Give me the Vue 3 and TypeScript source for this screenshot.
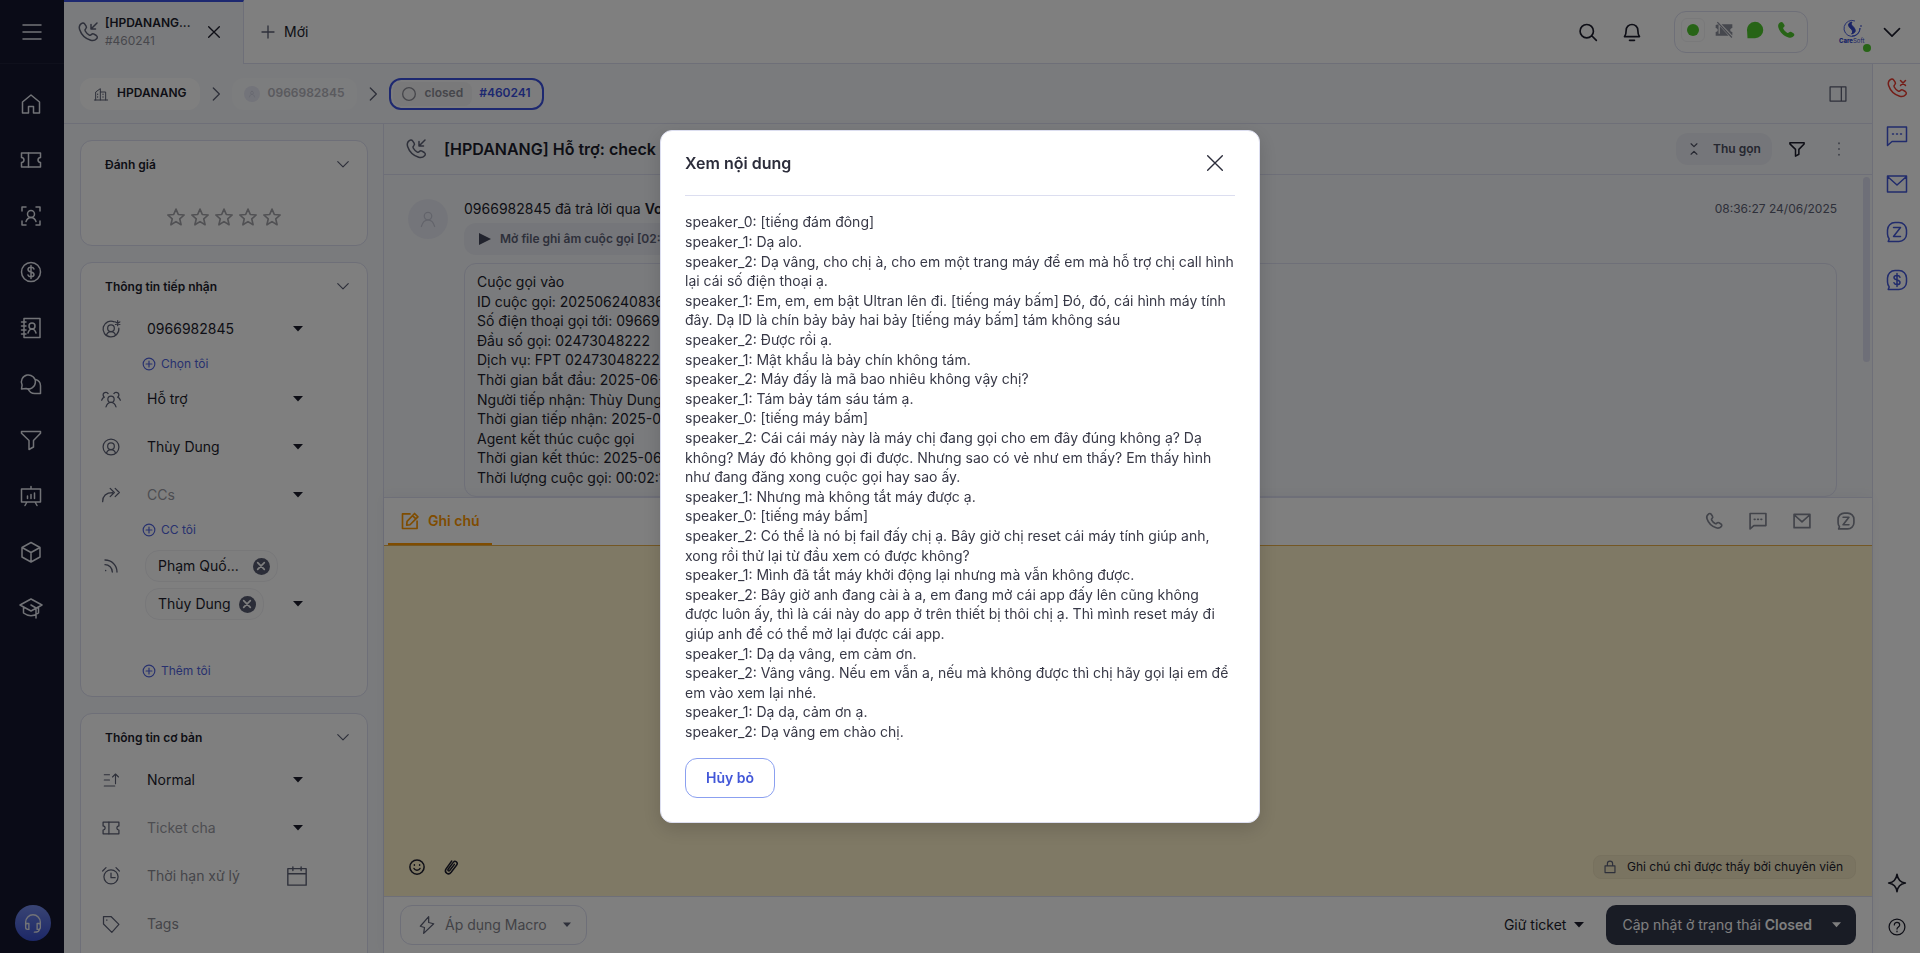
<script setup lang="ts">
import { h, ref } from 'vue'

const handset =
  'M5.300 3.700c1-1 2.500-.9 3.300.2l1.500 2.300c.6.9.4 1.900-.4 2.600-.9.7-1 1.300-.5 2.200 1 1.800 2.300 3.100 4.100 4.100.9.5 1.400.3 2.100-.5.700-.8 1.700-1 2.600-.5l2.300 1.400c1.200.8 1.300 2.300.3 3.300-1.600 1.700-3.500 2.200-5.900 1.400C9.300 18.500 5.300 14.500 3.600 9.400c-.8-2.400-.2-4.200 1.700-5.700z'
const ticket =
  'M2.500 5h19v4.500c-1.500.2-2.500 1.100-2.500 2.500s1 2.300 2.500 2.500V19h-19v-4.500c1.500-.2 2.500-1.100 2.500-2.500s-1-2.300-2.500-2.500V5z'
const balloon = 'M12 2.500h2a7.500 7.500 0 0 1 7.500 7.500v4a7.500 7.500 0 0 1-7.500 7.500H3.200l1-2.600A8 8 0 0 1 2.500 14v-4A7.500 7.500 0 0 1 10 2.500z'

const icons: Record<string, string[]> = {
  menu: ['M3 5h18M3 12h18M3 19h18'],
  home: ['M3.500 21V10L12 3l8.500 7v11h-6v-6.500h-5V21z'],
  ticket: [ticket, 'M9.500 5v14'],
  scan: ['M3 7V3h4M17 3h4v4M21 17v4h-4M7 21H3v-4', 'M12 6.500a3.500 3.500 0 1 1 0 7 3.500 3.500 0 0 1 0-7z', 'M7 17.500c1-2.600 2.600-4 5-4s4 1.400 5 4'],
  dollar: ['M12 2.500a9.500 9.500 0 1 1 0 19 9.500 9.500 0 0 1 0-19z', 'M15 9c-.4-1.200-1.500-1.700-3-1.700-1.700 0-3 .8-3 2.200 0 3.500 6 1.500 6 5 0 1.400-1.300 2.200-3 2.200-1.500 0-2.600-.6-3-1.800M12 5.500v13'],
  contacts: ['M5 2.500h16v19H5zM2.500 6H7M2.500 10H7M2.500 14H7M2.500 18H7', 'M13 7a3 3 0 1 1 0 6 3 3 0 0 1 0-6z', 'M9 17c.8-2.400 2-4 4-4s3.200 1.600 4 4'],
  chats: ['M2.500 17l.6-4A7 7 0 1 1 7 16.500z', 'M16.500 7.500c3 .8 5 3.200 5 6.300v7.700h-5.700c-3.300 0-5.600-1.900-6.500-4.500'],
  funnel: ['M2.500 3.500h19v1.700l-7 7.300v6.500l-4.500 2.500v-9l-7.500-7.300z'],
  board: ['M2.500 5h19v13h-19zM12 2.500V5M8 18l-2 3.500M16 18l2 3.500M8.500 14.500V12M12 14.500v-4M15.500 14.500V9'],
  box: ['M12 2.500l9 5v9.500l-9 5-9-5V7.500zM3 7.500l9 5 9-5M12 12.500V22'],
  cap: ['M12 3l11 6-11 6L1 9zM12 9l5 3v10M4.500 11.500V17c4.500 3.500 10.500 3.500 15 0v-5.500'],
  headset: ['M4 14v-3a8 8 0 0 1 16 0v3', 'M4 12.500h3.500V19H6a2 2 0 0 1-2-2zM20 12.500h-3.500V19H18a2 2 0 0 0 2-2zM19 18.500c0 2-2 3.500-5.500 3.500'],
  phone: [handset],
  phoneIn: [handset, 'M21 3l-6 6M15 4.500V9h4.500'],
  phoneOff: [handset, 'M15.500 4.500l5 5M20.500 4.500l-5 5'],
  close: ['M4 4l16 16M20 4L4 20'],
  plus: ['M12 3v18M3 12h18'],
  search: ['M10.500 3a8 8 0 1 1 0 16 8 8 0 0 1 0-16zM16.500 16.500l5.500 5.500'],
  bell: ['M3 17.500h18c-1.600-1.700-2-3.300-2-7.500a7 7 0 0 0-14 0c0 4.200-.4 5.800-2 7.500zM9 22h6'],
  down: ['M3 8l9 9 9-9'],
  right: ['M8 3l9 9-9 9'],
  building: ['M2 21h20M4 21V9l7-5v17M11 9h8v12M7 12v1M7 16v1M15 12v1M15 16v1'],
  panel: ['M2.500 3.500h19v17h-19zM16 3.500v17'],
  collapse: ['M7 3l5 5 5-5M7 21l5-5 5 5'],
  dots: ['M12 3v1M12 11.500v1M12 20v1'],
  star: ['M12 2.500l2.800 6.500 7 .6-5.300 4.700 1.600 7L12 17.500 5.900 21.300l1.600-7L2.200 9.600l7-.6z'],
  person: ['M12 4a4.500 4.500 0 1 1 0 9 4.500 4.500 0 0 1 0-9z', 'M4 21c1.500-5 4-8 8-8s6.500 3 8 8'],
  userCircle: ['M12 2.500a9.500 9.500 0 1 1 0 19 9.500 9.500 0 0 1 0-19z', 'M12 7a4 4 0 1 1 0 8 4 4 0 0 1 0-8z', 'M6.500 19.500c1-3 3-4.500 5.500-4.500s4.500 1.500 5.500 4.500'],
  userGear: ['M16 3.400a9.500 9.500 0 1 0 5.400 7.600', 'M12 7a4 4 0 1 1 0 8 4 4 0 0 1 0-8z', 'M6.500 19.500c1-3 3-4.500 5.500-4.500s4.500 1.500 5.500 4.500', 'M20 2v6M17.400 3.500l5.200 3M22.600 3.500l-5.200 3'],
  group: ['M12 8.500a3.800 3.800 0 1 1 0 7.600 3.800 3.800 0 0 1 0-7.600z', 'M6 21.500c1.200-3.700 3.200-5.400 6-5.400s4.800 1.700 6 5.400', 'M8.500 5.500a3.200 3.200 0 1 0-4.500 4.300c-1.700.6-2.700 2-3.200 3.700M15.500 5.500a3.200 3.200 0 1 1 4.500 4.300c1.700.6 2.700 2 3.200 3.700'],
  forward: ['M2 20c0-7 4-11 12-11M11 4l5 5-5 5M17 4l5 5-5 5'],
  rss: ['M3 3c10 0 18 8 18 18M3 10c6 0 11 5 11 11M4 18.500v.5'],
  plusCircle: ['M12 2a10 10 0 1 1 0 20 10 10 0 0 1 0-20zM12 7v10M7 12h10'],
  priority: ['M3 5h7M3 12h7M3 20h14M18 17V4M14 8l4-4 4 4'],
  alarm: ['M12 4.500a8.500 8.500 0 1 1 0 17 8.500 8.500 0 0 1 0-17zM12 8.500V14h5M2 6l4-4M22 6l-4-4'],
  calendar: ['M2 4h20v18H2zM2 9.500h20M7.500 2v4M16.500 2v4'],
  tag: ['M3 3h9l9.500 9.500L13 22 3 12zM7 7v.5'],
  smile: ['M12 2.500a9.500 9.500 0 1 1 0 19 9.500 9.500 0 0 1 0-19z', 'M8 14c1.500 3 6.500 3 8 0M8.500 9v.8M15.500 9v.8'],
  clip: ['M16.500 8.500l-6.300 8.200c-1.200 1.400-3.200-.2-2.100-1.700L15 5.800c2.600-3.200 7 .3 4.600 3.500l-7.400 9.800c-3.700 4.600-10 0-6.600-5L13 4'],
  lock: ['M3.500 10h17v11.500h-17zM7.500 10V6.500a4.500 4.500 0 0 1 9 0V10'],
  bolt: ['M14 2L4 13.500l5 1.500-1 7L20 10.500l-6-1.500z'],
  message: ['M2.500 3h19v14.500H7L2.500 21.500zM7.500 10h1M11.500 10h1M15.500 10h1'],
  mail: ['M2.500 4h19v16h-19zM2.500 4.500L12 13l9.500-8.500'],
  zalo: [balloon, 'M8.500 7.500h7l-7 9h7'],
  moneyChat: [balloon, 'M15 9.200c-.4-1.200-1.500-1.700-3-1.700-1.700 0-3 .8-3 2.100 0 3.300 6 1.500 6 4.800 0 1.300-1.300 2.100-3 2.100-1.500 0-2.600-.6-3-1.700M12 5.500v13'],
  spark: ['M12 1.500c.8 6.300 3.500 9.500 10 10.500-6.500 1-9.200 4.200-10 10.500C11.200 16.200 8.500 13 2 12c6.500-1 9.200-4.200 10-10.500z'],
  help: ['M12 2.500a9.500 9.500 0 1 1 0 19 9.500 9.500 0 0 1 0-19z', 'M8.800 9.500C8.800 5.500 15.200 5.700 15.200 9.500c0 2.500-3.200 2.400-3.200 5M12 17v.8'],
  edit: ['M12 3.500H3v17.500h17.500V12', 'M8.500 12.500L17.500 3l4 4-9.500 9.500-4 .5zM15 5.500l4 4'],
  ring: ['M12 2.500a9.500 9.500 0 1 1 0 19 9.500 9.500 0 0 1 0-19z'],
}

interface IconProps { name: string; size?: number; weight?: number }
const Icon = (p: IconProps) =>
  h(
    'svg',
    {
      viewBox: '0 0 24 24', width: p.size ?? 20, height: p.size ?? 20, fill: 'none', stroke: 'currentColor',
      'stroke-width': p.weight ?? 1.5, 'stroke-linejoin': 'round', 'stroke-linecap': 'round', 'aria-hidden': 'true',
    },
    icons[p.name].map((d) => h('path', { d })),
  )
Icon.props = ['name', 'size', 'weight']

const Caret = () => h('svg', { viewBox: '0 0 10 6', width: 10, height: 6, fill: 'currentColor', 'aria-hidden': 'true' }, [h('path', { d: 'M0 0h10L5 5.500z' })])

const nav = [
  ['home', 'Trang chủ'], ['ticket', 'Ticket'], ['scan', 'Khách hàng'], ['dollar', 'Bán hàng'], ['contacts', 'Danh bạ'],
  ['chats', 'Hội thoại'], ['funnel', 'Bộ lọc'], ['board', 'Báo cáo'], ['box', 'Sản phẩm'], ['cap', 'Đào tạo'],
]
const rail = [['message', 'SMS'], ['mail', 'Email'], ['zalo', 'Zalo'], ['moneyChat', 'Giao dịch']]
const channels = [['phone', 'Gọi'], ['message', 'SMS'], ['mail', 'Email'], ['zalo', 'Zalo']]

const callLog = [
  'Cuộc gọi vào',
  'ID cuộc gọi: 20250624083627',
  'Số điện thoại gọi tới: 0966982845',
  'Đầu số gọi: 02473048222',
  'Dịch vụ: FPT 02473048222',
  'Thời gian bắt đầu: 2025-06-24 08:36:27',
  'Người tiếp nhận: Thùy Dung',
  'Thời gian tiếp nhận: 2025-06-24 08:36:30',
  'Agent kết thúc cuộc gọi',
  'Thời gian kết thúc: 2025-06-24 08:38:40',
  'Thời lượng cuộc gọi: 00:02:10',
]

const transcript = [
  'speaker_0: [tiếng đám đông]',
  'speaker_1: Dạ alo.',
  'speaker_2: Dạ vâng, cho chị à, cho em một trang máy để em mà hỗ trợ chị call hình lại cái số điện thoại ạ.',
  'speaker_1: Em, em, em bật Ultran lên đi. [tiếng máy bấm] Đó, đó, cái hình máy tính đây. Dạ ID là chín bảy bảy hai bảy [tiếng máy bấm] tám không sáu',
  'speaker_2: Được rồi ạ.',
  'speaker_1: Mật khẩu là bảy chín không tám.',
  'speaker_2: Máy đấy là mã bao nhiêu không vậy chị?',
  'speaker_1: Tám bảy tám sáu tám ạ.',
  'speaker_0: [tiếng máy bấm]',
  'speaker_2: Cái cái máy này là máy chị đang gọi cho em đây đúng không ạ? Dạ không? Máy đó không gọi đi được. Nhưng sao có vẻ như em thấy? Em thấy hình như đang đăng xong cuộc gọi hay sao ấy.',
  'speaker_1: Nhưng mà không tắt máy được ạ.',
  'speaker_0: [tiếng máy bấm]',
  'speaker_2: Có thể là nó bị fail đấy chị ạ. Bây giờ chị reset cái máy tính giúp anh, xong rồi thử lại từ đầu xem có được không?',
  'speaker_1: Mình đã tắt máy khởi động lại nhưng mà vẫn không được.',
  'speaker_2: Bây giờ anh đang cài à a, em đang mở cái app đấy lên cũng không được luôn ấy, thì là cái này do app ở trên thiết bị thôi chị ạ. Thì mình reset máy đi giúp anh để có thể mở lại được cái app.',
  'speaker_1: Dạ dạ vâng, em cảm ơn.',
  'speaker_2: Vâng vâng. Nếu em vẫn a, nếu mà không được thì chị hãy gọi lại em để em vào xem lại nhé.',
  'speaker_1: Dạ dạ, cảm ơn ạ.',
  'speaker_2: Dạ vâng em chào chị.',
]

const modalOpen = ref(true)
const note = ref('')
</script>

<template>
  <div class="app">
    <nav class="sidebar" aria-label="Menu chính">
      <button class="menu" aria-label="Menu"><Icon name="menu" :size="24" /></button>
      <a v-for="[icon, label] in nav" :key="icon" href="#" class="nav-link" :aria-label="label"><Icon :name="icon" :size="24" /></a>
      <button class="support" aria-label="Hỗ trợ"><Icon name="headset" :size="22" /></button>
    </nav>

    <div class="page">
      <header class="topbar">
        <div class="tab">
          <Icon name="phoneIn" :size="24" class="muted" />
          <a href="#" class="tab-text"><strong>[HPDANANG...</strong><span>#460241</span></a>
          <button aria-label="Đóng tab"><Icon name="close" :size="16" :weight="2" /></button>
        </div>
        <div class="topbar-rest">
          <button class="new-tab"><Icon name="plus" :size="16" :weight="2" class="muted" />Mới</button>
          <div class="tools">
            <button aria-label="Tìm kiếm"><Icon name="search" :weight="2" /></button>
            <button class="bell" aria-label="Thông báo"><Icon name="bell" :weight="2" /></button>
            <div class="status">
              <button class="status-on" aria-label="Trực tuyến"><i class="dot"></i></button>
              <button class="off" aria-label="Ticket tắt">
                <svg viewBox="0 0 24 24" width="20" height="20" fill="currentColor">
                  <path d="M2 6v3.500c1.500.2 2.500 1.200 2.500 2.500S3.500 14.300 2 14.500V19h15.500L7 7.500v9H5.500V5z" />
                  <path d="M9 5h13v4.500c-1.500.2-2.500 1.200-2.500 2.500s1 2.300 2.500 2.500v4z" />
                  <path d="M4 2.500L21.500 21" fill="none" stroke="currentColor" stroke-width="1.500" />
                </svg>
              </button>
              <button class="on" aria-label="Chat bật">
                <svg viewBox="0 0 24 24" width="18" height="18" fill="currentColor"><path d="M12 1a11 11 0 1 1 0 22H2l-.5-9A11 11 0 0 1 12 1z" /></svg>
              </button>
              <button class="on" aria-label="Thoại bật">
                <svg viewBox="2 2 20 20" width="18" height="18" fill="currentColor"><path :d="handset" /></svg>
              </button>
            </div>
            <div class="account">
              <svg viewBox="0 0 28 28" width="28" height="28" aria-label="CareSoft">
                <path d="M17 3A8 8 0 1 0 22 10M22 10a8 8 0 0 1-8 8" fill="none" stroke="#4a5fe0" />
                <path d="M14 4c-6 1.500-3 5-.5 7.500 1.700 1.700 1.500 3.500 0 4.500 5.500-1.500 4-5 1.500-7.500-1.500-1.500-2.500-2.500-1-4.500z" fill="#3346cc" stroke="#3346cc" />
                <path d="M23 7l1 1-1 1-1-1z" fill="#3346cc" />
                <text x="1" y="25" class="logo-text"><tspan class="logo-bold">Care</tspan>Soft</text>
              </svg>
              <i class="presence"></i>
            </div>
            <button aria-label="Tài khoản"><Icon name="down" :weight="2" /></button>
          </div>
        </div>
      </header>

      <div class="body">
        <div class="workspace">
          <div class="crumbs">
            <a href="#" class="crumb"><Icon name="building" :size="16" class="muted" />HPDANANG</a>
            <Icon name="right" :size="16" :weight="2" class="muted sep" />
            <a href="#" class="crumb faint"><span class="mini"><Icon name="person" :size="8" /></span>0966982845</a>
            <Icon name="right" :size="16" :weight="2" class="muted sep" />
            <a href="#" class="crumb current"><span class="state"><Icon name="ring" :size="16" :weight="2" />closed</span>#460241</a>
            <button class="panel" aria-label="Bảng bên"><Icon name="panel" :size="20" class="muted" /></button>
          </div>

          <div class="columns">
            <aside class="fields">
              <section class="card">
                <h2>Đánh giá<Icon name="down" :size="14" :weight="2" class="muted" /></h2>
                <div class="stars">
                  <button v-for="n in 5" :key="n" :aria-label="`${n} sao`"><Icon name="star" :weight="2" /></button>
                </div>
              </section>

              <section class="card">
                <h2>Thông tin tiếp nhận<Icon name="down" :size="14" :weight="2" class="muted" /></h2>
                <label class="row"><Icon name="userGear" class="muted" /><select aria-label="Người yêu cầu"><option>0966982845</option></select><Caret class="caret" /></label>
                <button class="add"><Icon name="plusCircle" :size="14" :weight="2" />Chọn tôi</button>
                <label class="row"><Icon name="group" class="muted" /><select aria-label="Nhóm"><option>Hỗ trợ</option></select><Caret class="caret" /></label>
                <label class="row"><Icon name="userCircle" class="muted" /><select aria-label="Chuyên viên"><option>Thùy Dung</option></select><Caret class="caret" /></label>
                <label class="row"><Icon name="forward" class="muted" /><select class="empty" aria-label="CCs"><option>CCs</option></select><Caret class="caret" /></label>
                <button class="add"><Icon name="plusCircle" :size="14" :weight="2" />CC tôi</button>
                <div class="followers">
                  <Icon name="rss" :size="16" :weight="2" class="muted rss" />
                  <div class="people">
                    <span class="person wide">Phạm Quố...<button aria-label="Bỏ Phạm Quố..."><Icon name="close" :size="10" :weight="4" /></button></span>
                    <span class="person">Thùy Dung<button aria-label="Bỏ Thùy Dung"><Icon name="close" :size="10" :weight="4" /></button></span>
                  </div>
                  <button class="open" aria-label="Mở danh sách"><Caret /></button>
                </div>
                <button class="add last"><Icon name="plusCircle" :size="14" :weight="2" />Thêm tôi</button>
              </section>

              <section class="card rest">
                <h2>Thông tin cơ bản<Icon name="down" :size="14" :weight="2" class="muted" /></h2>
                <label class="row"><Icon name="priority" :size="18" class="muted" /><select aria-label="Độ ưu tiên"><option>Normal</option></select><Caret class="caret" /></label>
                <label class="row"><Icon name="ticket" class="muted" /><select class="empty" aria-label="Ticket cha"><option>Ticket cha</option></select><Caret class="caret" /></label>
                <label class="row"><Icon name="alarm" class="muted" /><input placeholder="Thời hạn xử lý" aria-label="Thời hạn xử lý" /><Icon name="calendar" :size="22" class="muted" /></label>
                <label class="row"><Icon name="tag" class="muted" /><input placeholder="Tags" aria-label="Tags" /></label>
              </section>
            </aside>

            <main class="main">
              <div class="title-bar">
                <Icon name="phoneIn" :size="24" class="muted" />
                <h1>[HPDANANG] Hỗ trợ: check</h1>
                <button class="fold"><Icon name="collapse" :size="14" :weight="2" />Thu gọn</button>
                <button aria-label="Lọc"><Icon name="funnel" :size="18" :weight="2" /></button>
                <button aria-label="Thêm" class="more"><Icon name="dots" :size="16" :weight="2" class="muted" /></button>
              </div>

              <div class="thread">
                <span class="avatar"><Icon name="person" /></span>
                <div class="message">
                  <p class="by"><span>0966982845 đã trả lời qua <strong>Voice</strong></span><time>08:36:27 24/06/2025</time></p>
                  <button class="play"><svg viewBox="0 0 12 12" width="12" height="12" fill="currentColor"><path d="M0 0l12 6-12 6z" /></svg>Mở file ghi âm cuộc gọi [02:10]</button>
                  <div class="log"><p v-for="line in callLog" :key="line">{{ line }}</p></div>
                </div>
                <i class="thumb"></i>
              </div>

              <div class="composer">
                <div class="composer-tabs">
                  <button class="note-tab"><Icon name="edit" :weight="2" />Ghi chú</button>
                  <div class="channels">
                    <button v-for="[icon, label] in channels" :key="icon" :aria-label="label"><Icon :name="icon" :weight="2" /></button>
                  </div>
                </div>
                <div class="note">
                  <textarea v-model="note" aria-label="Ghi chú"></textarea>
                  <div class="note-bar">
                    <button aria-label="Biểu cảm"><Icon name="smile" :size="18" :weight="2" /></button>
                    <button aria-label="Đính kèm"><Icon name="clip" :size="18" :weight="2" /></button>
                    <span class="private"><Icon name="lock" :size="14" :weight="2" class="muted" />Ghi chú chỉ được thấy bởi chuyên viên</span>
                  </div>
                </div>
                <footer class="actions">
                  <button class="macro"><Icon name="bolt" :size="20" />Áp dụng Macro<Caret /></button>
                  <button class="keep">Giữ ticket<Caret /></button>
                  <button class="update"><span>Cập nhật ở trạng thái <b>Closed</b></span><Caret /></button>
                </footer>
              </div>
            </main>
          </div>
        </div>

        <aside class="rail">
          <button class="danger" aria-label="Ngắt máy"><Icon name="phoneOff" :size="24" /></button>
          <button v-for="[icon, label] in rail" :key="icon" :aria-label="label"><Icon :name="icon" :size="24" /></button>
          <button class="dark first" aria-label="Trợ lý"><Icon name="spark" :size="20" :weight="2" /></button>
          <button class="dark" aria-label="Trợ giúp"><Icon name="help" :size="20" /></button>
        </aside>
      </div>
    </div>

    <div v-if="modalOpen" class="overlay">
      <section class="modal" role="dialog" aria-modal="true" aria-labelledby="modal-title">
        <header class="modal-head">
          <h2 id="modal-title">Xem nội dung</h2>
          <button aria-label="Đóng" @click="modalOpen = false"><Icon name="close" :size="22" /></button>
        </header>
        <div class="transcript"><p v-for="(line, i) in transcript" :key="i">{{ line }}</p></div>
        <button class="cancel" @click="modalOpen = false">Hủy bỏ</button>
      </section>
    </div>
  </div>
</template>

<style>
body { margin: 0; overflow: hidden; }
</style>

<style scoped>
.app {
  --line: #dcdef0; --ink: #1c1d2c; --muted: #5c6075; --pale: #f5f7fa; --blue: #4257d8;
  display: flex; height: 100vh; font: 14px/1.4 Inter, "Noto Sans", sans-serif; color: var(--ink);
}
.app *, .app *::before { box-sizing: border-box; }
p, h1, h2 { margin: 0; }
svg { flex: none; display: block; }
a { color: inherit; text-decoration: none; }
button { display: flex; align-items: center; justify-content: center; padding: 0; border: 0; background: none; font: inherit; color: inherit; cursor: pointer; }
.muted { color: var(--muted); }

.sidebar { flex: none; width: 64px; display: flex; flex-direction: column; background: #14172e; color: #e4e6ee; }
.menu { height: 64px; border-bottom: 1px solid #1e2138; margin-bottom: 12px; }
.nav-link { height: 56px; display: flex; align-items: center; justify-content: center; padding-right: 2px; }
.support { width: 36px; height: 36px; margin: auto 0 12px 15px; border-radius: 50%; background: linear-gradient(#7289e8, #3a50cf); }

.page { flex: 1; min-width: 0; display: flex; flex-direction: column; background: #fff; }
.topbar { flex: none; height: 64px; display: flex; }
.tab { width: 180px; display: flex; align-items: center; gap: 5px; padding: 0 21px 2px 12px; border-top: 2px solid #3a50e0; border-right: 1px solid var(--line); background: var(--pale); }
.tab-text { flex: 1; font-size: 12px; line-height: 18px; white-space: nowrap; }
.tab-text strong, .tab-text span { display: block; font-weight: 600; }
.tab-text span { font-weight: 400; color: #8f8f99; }
.topbar-rest { flex: 1; display: flex; align-items: center; justify-content: space-between; border-bottom: 1px solid var(--line); padding: 0 18px 0 16px; }
.new-tab { gap: 8px; }
.tools { display: flex; align-items: center; }
.bell { margin-left: 24px; }
.status { display: flex; gap: 7px; margin: 0 30px 0 32px; width: 134px; height: 42px; padding: 6px; border: 1px solid var(--line); border-radius: 12px; }
.status button { width: 24px; height: 24px; }
.status .status-on { border: 1px solid #f2f2f5; border-radius: 6px; }
.dot { width: 12px; height: 12px; border-radius: 50%; background: #4fc92d; }
.on { color: #4fc92d; }
.off { color: #8d909d; }
.account { position: relative; margin-right: 16px; }
.logo-text { font-size: 6px; fill: #3346cc; }
.logo-bold { font-weight: 800; }
.presence { position: absolute; right: -5px; bottom: -6px; width: 8px; height: 8px; border-radius: 50%; background: #4fc92d; }

.body { flex: 1; min-height: 0; display: flex; }
.workspace { flex: 1; min-width: 0; display: flex; flex-direction: column; background: var(--pale); }
.crumbs { flex: none; height: 60px; display: flex; align-items: center; padding: 0 24px 0 16px; border-bottom: 1px solid var(--line); }
.crumb { display: flex; align-items: center; gap: 8px; height: 32px; padding: 0 13px; border-radius: 12px; background: #fff; font-size: 12px; font-weight: 600; }
.sep { margin: 0 8px; }
.faint { background: #f9fafc; color: #b4b5bd; padding: 0 12px; }
.mini { width: 16px; height: 16px; display: grid; place-items: center; border-radius: 50%; background: #e6e8f4; color: #c4c6d6; }
.current { border: 2px solid #3a50e0; padding: 0 12px 0 2px; gap: 7px; background: #fafbfd; color: #3a50e0; }
.state { display: flex; align-items: center; gap: 8px; height: 24px; padding: 0 9px 0 8px; border-radius: 8px; background: #f2f2f4; color: #8c8d97; }
.panel { margin-left: auto; }

.columns { flex: 1; min-height: 0; display: flex; }
.fields { flex: none; width: 320px; padding: 16px 15px 0 16px; border-right: 1px solid var(--line); overflow: hidden; display: flex; flex-direction: column; gap: 16px; }
.card { flex: none; border: 1px solid var(--line); border-radius: 12px; background: #fff; }
.rest { padding-bottom: 48px; }
.card h2 { display: flex; justify-content: space-between; padding: 16px 17px 10px 24px; font-size: 12px; font-weight: 600; line-height: 16px; }
.stars { display: flex; justify-content: center; gap: 4px; padding: 24px 0 18px 0; color: #a3a3a8; }
.row { display: flex; align-items: center; height: 48px; padding: 0 59px 0 20px; }
.row > svg:first-child { width: 20px; }
.row select, .row input { flex: 1; min-width: 0; margin-left: 26px; padding: 0; border: 0; outline: 0; background: none; appearance: none; font: inherit; color: inherit; }
.row .empty { color: #9a9ba3; }
.row input::placeholder { color: #8a8a92; opacity: 1; }
.caret { margin-right: 5px; }
.add { height: 22px; margin-left: 61px; gap: 5px; font-size: 12px; color: #5063dd; }
.followers { display: flex; align-items: flex-start; padding: 9px 59px 0 22px; }
.rss { margin-top: 8px; }
.people { flex: 1; display: flex; flex-direction: column; align-items: flex-start; gap: 6px; margin-left: 26px; }
.person { display: flex; align-items: center; gap: 8px; height: 32px; padding: 0 7px 0 12px; border: 1px solid #f0f0f3; border-radius: 14px; background: #fcfcfd; white-space: nowrap; }
.person.wide { gap: 14px; }
.person button { width: 17px; height: 17px; border-radius: 50%; background: #575b70; color: #fff; }
.open { align-self: flex-end; height: 32px; margin-left: -20px; margin-right: 5px; }
.last { margin-top: 40px; margin-bottom: 14px; }

.main { flex: 1; min-width: 0; display: flex; flex-direction: column; }
.title-bar { flex: none; height: 51px; display: flex; align-items: center; padding: 0 25px 0 20px; border-bottom: 1px solid var(--line); }
h1 { flex: 1; margin-left: 16px; font-size: 16px; font-weight: 600; }
.fold { gap: 12px; width: 96px; height: 32px; margin-right: 16px; border-radius: 12px; background: #eaecf4; font-size: 12px; font-weight: 600; color: #4b4e60; }
.more { margin-left: 25px; }
.thread { position: relative; flex: none; display: flex; gap: 16px; padding: 24px 35px 0 24px; }
.avatar { flex: none; width: 40px; height: 40px; display: grid; place-items: center; border-radius: 50%; background: #e9ebf5; color: #c6c8d6; }
.message { flex: 1; min-width: 0; }
.by { display: flex; justify-content: space-between; height: 20px; margin-bottom: 4px; }
.by strong { font-weight: 600; }
time { font-size: 12px; line-height: 20px; color: var(--muted); }
.play { gap: 9px; height: 32px; margin-bottom: 8px; padding: 0 16px 0 15px; border-radius: 12px; background: #eaecf4; font-size: 12px; font-weight: 600; color: var(--muted); }
.play svg { color: #43465a; }
.log { padding: 8px 12px; border: 1px solid var(--line); border-radius: 12px; }
.thumb { position: absolute; top: 2px; right: 2px; width: 7px; height: 185px; border-radius: 4px; background: #dcdef0; }

.composer { flex: 1; min-height: 0; display: flex; flex-direction: column; border-top: 1px solid var(--line); background: #fff; box-shadow: 0 -2px 12px rgba(80, 80, 160, .06); }
.composer-tabs { flex: none; height: 48px; display: flex; justify-content: space-between; padding: 0 16px 0 4px; border-bottom: 1px solid #e8ae48; }
.note-tab { gap: 8px; padding: 2px 12px 0; border-bottom: 2px solid #ff9800; color: #ff9800; font-weight: 600; }
.channels { display: flex; gap: 24px; color: #858895; }
.note { flex: 1; min-height: 0; display: flex; flex-direction: column; background: #fff2cb; }
.note textarea { flex: 1; border: 0; outline: 0; resize: none; background: none; padding: 16px 24px; font: inherit; }
.note-bar { display: flex; align-items: center; gap: 16px; padding: 0 16px 17px 24px; }
.private { display: flex; align-items: center; gap: 10px; height: 24px; margin-left: auto; padding: 0 12px 0 9px; border: 1px solid #eee2bd; border-radius: 8px; background: #f4e8c3; font-size: 12px; }
.actions { flex: none; display: flex; align-items: center; height: 57px; padding: 0 16px; border-top: 1px solid var(--line); }
.macro { gap: 8px; height: 40px; padding: 0 15px 0 16px; border: 1px solid var(--line); border-radius: 12px; color: #85858d; }
.macro > svg { color: var(--muted); }
.macro > svg:last-child { margin-left: 8px; width: 8px; }
.keep { gap: 8px; margin-left: auto; margin-right: 22px; }
.update { gap: 20px; height: 40px; padding: 0 15px 0 16px; border-radius: 10px; background: #33384b; color: #fff; }
.update b { font-weight: 600; }
.update > svg { width: 9px; }

.rail { flex: none; width: 48px; display: flex; flex-direction: column; gap: 24px; align-items: center; padding: 12px 0 16px 1px; border-left: 1px solid var(--line); color: var(--blue); }
.danger { color: #e93a2e; }
.dark { color: var(--ink); }
.first { margin-top: auto; }

.overlay { position: fixed; inset: 0; display: flex; align-items: center; justify-content: center; background: rgba(0, 0, 0, .5); color: #373846; }
.modal { width: 600px; max-width: 100%; padding: 16px 24px 24px; border: 1px solid var(--line); border-radius: 12px; background: #fff; box-shadow: 0 6px 20px rgba(0, 0, 0, .15); }
.modal-head { display: flex; align-items: center; justify-content: space-between; height: 49px; padding: 0 9px 16px 0; border-bottom: 1px solid var(--line); margin-bottom: 16px; color: #2c2d3b; }
.modal-head h2 { font-size: 16px; font-weight: 600; }
.cancel { height: 40px; margin-top: 16px; padding: 0 20px; border: 1px solid #8ba0f0; border-radius: 12px; color: var(--blue); font-weight: 600; }
</style>
